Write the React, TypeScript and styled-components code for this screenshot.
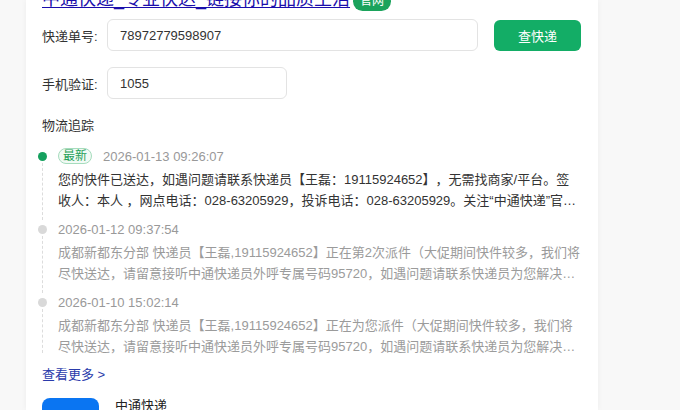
import React from "react";
import styled, { createGlobalStyle } from "styled-components";

const Global = createGlobalStyle`
  html, body { margin: 0; padding: 0; }
  body {
    background: #f8f8f8;
    height: 410px;
    overflow: hidden;
    font-family: "Liberation Sans", "Noto Sans CJK SC", sans-serif;
    color: #333;
    text-spacing-trim: space-all;
  }
  * { box-sizing: border-box; }
`;

const Page = styled.div`
  display: flex;
  height: 410px;
  overflow: hidden;
`;

const Card = styled.main`
  margin-left: 26px;
  width: 572px;
  background: #fff;
  box-shadow: 0 0 6px rgba(0, 0, 0, 0.05);
  padding: 0 16px;
  display: flex;
  flex-direction: column;
  overflow: hidden;
`;

const TitleRow = styled.div`
  display: flex;
  align-items: center;
  gap: 3px;
  height: 26px;
  margin-top: -14px;
  flex-shrink: 0;
`;

const TitleLink = styled.a`
  font-size: 18px;
  line-height: 26px;
  color: #1a0dab;
  text-decoration: underline;
  text-underline-offset: 2px;
`;

const OfficialBadge = styled.span`
  background: #1ba35c;
  color: #fff;
  font-size: 12px;
  line-height: 19px;
  height: 19px;
  padding: 0 7px;
  border-radius: 10px;
  margin-top: 4px;
`;

const FormRow = styled.div<{ $top: number }>`
  display: flex;
  align-items: center;
  margin-top: ${(p) => p.$top}px;
  flex-shrink: 0;
`;

const Label = styled.label`
  width: 65px;
  font-size: 13px;
  color: #333;
`;

const Input = styled.input<{ $w: number }>`
  width: ${(p) => p.$w}px;
  height: 32px;
  border: 1px solid #e3e3e3;
  border-radius: 6px;
  padding: 0 12px;
  font-size: 13px;
  font-family: inherit;
  color: #333;
  outline: none;
`;

const SearchButton = styled.button`
  margin-left: 16px;
  width: 87px;
  height: 31px;
  border: none;
  border-radius: 6px;
  background: #13ad66;
  color: #fff;
  font-size: 13px;
  font-family: inherit;
`;

const SectionTitle = styled.div`
  margin-top: 17px;
  font-size: 13px;
  line-height: 20px;
  color: #333;
  flex-shrink: 0;
`;

const Timeline = styled.ol`
  list-style: none;
  margin: 9px 0 0 -4px;
  padding: 0;
  flex-shrink: 0;
`;

const Item = styled.li`
  display: grid;
  grid-template-columns: 9px 524px;
  column-gap: 11px;
  padding-bottom: 7px;
  &:last-child { padding-bottom: 0; }
`;

const Rail = styled.div`
  display: flex;
  flex-direction: column;
  align-items: stretch;
  padding-top: 7px;
`;

const Dot = styled.span<{ $active: boolean }>`
  width: 9px;
  height: 9px;
  border-radius: 50%;
  background: ${(p) => (p.$active ? "#15a05e" : "#d9d9d9")};
  flex-shrink: 0;
`;

const RailLine = styled.span`
  flex: 1;
  margin: 2px 0 -9px 4px;
  border-left: 1px dashed #dcdcdc;
  ${Item}:last-child & { margin-bottom: 4px; }
`;

const Body = styled.div`
  display: flex;
  flex-direction: column;
`;

const Header = styled.div`
  display: flex;
  align-items: center;
  gap: 11px;
  height: 22px;
`;

const NewTag = styled.span`
  font-size: 12px;
  line-height: 14px;
  padding: 0 4px;
  border: 1px solid #a6dcbd;
  background: #f1faf5;
  color: #1f9f57;
  border-radius: 8px;
`;

const Time = styled.span`
  font-size: 13px;
  color: #999;
`;

const Desc = styled.p<{ $muted: boolean }>`
  margin: 2px 0 0;
  font-size: 13px;
  line-height: 21px;
  color: ${(p) => (p.$muted ? "#9b9b9b" : "#333")};
  display: -webkit-box;
  -webkit-line-clamp: 2;
  -webkit-box-orient: vertical;
  overflow: hidden;
`;

const MoreLink = styled.a`
  margin-top: 8px;
  font-size: 13px;
  line-height: 20px;
  color: #2a3bab;
  text-decoration: none;
  flex-shrink: 0;
`;

const Company = styled.div`
  display: flex;
  align-items: flex-start;
  gap: 16px;
  margin-top: 13px;
  flex-shrink: 0;
`;

const Logo = styled.div`
  width: 57px;
  height: 60px;
  border-radius: 8px;
  background: #0a75f2;
`;

const CompanyName = styled.span`
  margin-top: -2px;
  font-size: 13px;
  line-height: 20px;
  color: #222;
`;

const events = [
  {
    active: true,
    time: "2026-01-13 09:26:07",
    text:
      "您的快件已送达，如遇问题请联系快递员【王磊：19115924652】，无需找商家/平台。签收人：本人 ，网点电话：028-63205929，投诉电话：028-63205929。关注“中通快递”官方微信，查询更多快件信息。",
  },
  {
    active: false,
    time: "2026-01-12 09:37:54",
    text:
      "成都新都东分部 快递员【王磊,19115924652】正在第2次派件（大促期间快件较多，我们将尽快送达，请留意接听中通快递员外呼专属号码95720，如遇问题请联系快递员为您解决问题。",
  },
  {
    active: false,
    time: "2026-01-10 15:02:14",
    text:
      "成都新都东分部 快递员【王磊,19115924652】正在为您派件（大促期间快件较多，我们将尽快送达，请留意接听中通快递员外呼专属号码95720，如遇问题请联系快递员为您解决问题。",
  },
];

export default function App() {
  return (
    <Page>
      <Global />
      <Card>
        <TitleRow>
          <TitleLink href="#">中通快递_专业快达_链接你的品质生活</TitleLink>
          <OfficialBadge>官网</OfficialBadge>
        </TitleRow>
        <FormRow $top={7}>
          <Label>快递单号:</Label>
          <Input $w={371} defaultValue="78972779598907" />
          <SearchButton>查快递</SearchButton>
        </FormRow>
        <FormRow $top={16}>
          <Label>手机验证:</Label>
          <Input $w={180} defaultValue="1055" />
        </FormRow>
        <SectionTitle>物流追踪</SectionTitle>
        <Timeline>
          {events.map((e) => (
            <Item key={e.time}>
              <Rail>
                <Dot $active={e.active} />
                <RailLine />
              </Rail>
              <Body>
                <Header>
                  {e.active && <NewTag>最新</NewTag>}
                  <Time>{e.time}</Time>
                </Header>
                <Desc $muted={!e.active}>{e.text}</Desc>
              </Body>
            </Item>
          ))}
        </Timeline>
        <MoreLink href="#">查看更多 &gt;</MoreLink>
        <Company>
          <Logo />
          <CompanyName>中通快递</CompanyName>
        </Company>
      </Card>
    </Page>
  );
}
